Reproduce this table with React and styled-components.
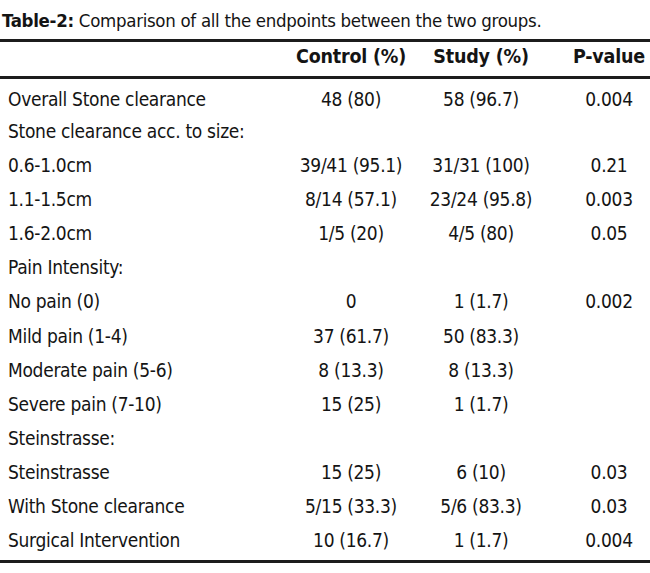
import React from 'react'
import styled, { createGlobalStyle } from 'styled-components'

const GlobalStyle = createGlobalStyle`
    body {
        margin: 0;
        background: #ffffff;
        overflow: hidden;
    }
`;

const Page = styled.div`
    width: 650px;
    height: 573px;
    background: #ffffff;
    color: #141414;
    font-family: "DejaVu Sans Condensed", "DejaVu Sans", sans-serif;
    font-stretch: condensed;
    font-size: 19px;
    letter-spacing: -0.3px;
`;

const Caption = styled.p`
    margin: 0 0 1px 0;
    padding: 4px 0 0 2px;
    font-size: 18.5px;
    line-height: 34px;
    white-space: nowrap;
`;

const CaptionLabel = styled.span`
    font-weight: 700;
`;

const Table = styled.div`
    border-top: 3px solid #1c1c1c;
    border-bottom: 3px solid #1c1c1c;
`;

const Grid = styled.div`
    display: grid;
    grid-template-columns: 280px 142px 118px 110px;
    align-items: center;
`;

const HeadRow = styled(Grid)`
    height: 29px;
    line-height: 29px;
    padding-bottom: 5px;
    border-bottom: 3px solid #1c1c1c;
    font-weight: 700;
    font-size: 19.5px;
    letter-spacing: -0.2px;
`;

const Body = styled.div`
    padding: 6px 0 3px 0;
`;

const Row = styled(Grid)`
    height: ${p => (p.$tight ? '29px' : '34.1px')};
    line-height: ${p => (p.$tight ? '29px' : '34.1px')};
`;

const Label = styled.div`
    padding-left: 8px;
    white-space: nowrap;
`;

const Cell = styled.div`
    text-align: center;
    white-space: nowrap;
    padding-left: ${p => (p.$last ? '28px' : '0')};
`;

const rows = [
    ['Overall Stone clearance', '48 (80)', '58 (96.7)', '0.004'],
    ['Stone clearance acc. to size:', '', '', ''],
    ['0.6-1.0cm', '39/41 (95.1)', '31/31 (100)', '0.21'],
    ['1.1-1.5cm', '8/14 (57.1)', '23/24 (95.8)', '0.003'],
    ['1.6-2.0cm', '1/5 (20)', '4/5 (80)', '0.05'],
    ['Pain Intensity:', '', '', ''],
    ['No pain (0)', '0', '1 (1.7)', '0.002'],
    ['Mild pain (1-4)', '37 (61.7)', '50 (83.3)', ''],
    ['Moderate pain (5-6)', '8 (13.3)', '8 (13.3)', ''],
    ['Severe pain (7-10)', '15 (25)', '1 (1.7)', ''],
    ['Steinstrasse:', '', '', ''],
    ['Steinstrasse', '15 (25)', '6 (10)', '0.03'],
    ['With Stone clearance', '5/15 (33.3)', '5/6 (83.3)', '0.03'],
    ['Surgical Intervention', '10 (16.7)', '1 (1.7)', '0.004'],
]

const App = () => {
    return (
        <Page>
            <GlobalStyle />
            <Caption>
                <CaptionLabel>Table-2:</CaptionLabel> Comparison of all the endpoints between the two groups.
            </Caption>
            <Table>
                <HeadRow>
                    <Label />
                    <Cell>Control (%)</Cell>
                    <Cell>Study (%)</Cell>
                    <Cell $last>P-value</Cell>
                </HeadRow>
                <Body>
                    {rows.map((r, i) => (
                        <Row key={i} $tight={i === 0}>
                            <Label>{r[0]}</Label>
                            <Cell>{r[1]}</Cell>
                            <Cell>{r[2]}</Cell>
                            <Cell $last>{r[3]}</Cell>
                        </Row>
                    ))}
                </Body>
            </Table>
        </Page>
    )
}

export default App
